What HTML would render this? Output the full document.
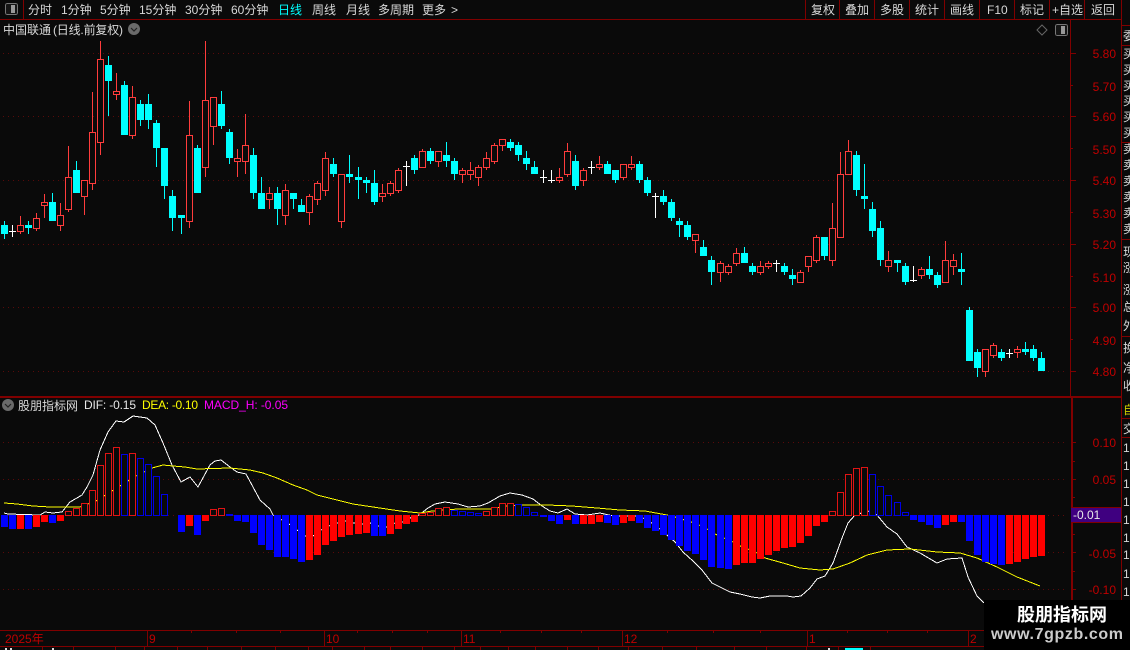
<!DOCTYPE html>
<html><head><meta charset="utf-8"><style>
html,body{margin:0;padding:0;background:#0a0a0a;width:1130px;height:650px;overflow:hidden}
svg{display:block;position:absolute;left:0;top:0}
text{font-family:"Liberation Sans","WenQuanYi Zen Hei","Noto Sans CJK SC",sans-serif;font-size:12px}
.t{fill:#d8d8d8}.a{fill:#c00000}
</style></head><body>
<svg id="s" width="1130" height="650" viewBox="0 0 1130 650" xmlns="http://www.w3.org/2000/svg">
<rect width="1130" height="650" fill="#0a0a0a"/>
<g fill="none" stroke="#5a0a0a" stroke-dasharray="1 4" shape-rendering="crispEdges">
<path d="M3 53.5H1066M3 116.5H1066M3 180.5H1066M3 244.5H1066M3 307.5H1066M3 371.5H1066M3 442.5H1066M3 479.5H1066M3 515.5H1066M3 552.5H1066M3 589.5H1066"/>
</g>
<g fill="none" stroke="#800000" shape-rendering="crispEdges">
<path d="M0 19.5H1121M0 396.5H1121M0 397.5H1121M0 630.5H984M0 646.5H984"/>
<path d="M1070.5 19V396M1071.5 397V630M1072.5 397V630M1121.5 0V630"/>
<path d="M23.5 0V19M805.5 0V19M839.5 0V19M874.5 0V19M909.5 0V19M944.5 0V19M979.5 0V19M1014.5 0V19M1049.5 0V19M1084.5 0V19"/>
<path d="M1121 25.5H1130M1121 45.5H1130M1121 142.5H1130M1121 239.5H1130M1121 336.5H1130M1121 418.5H1130M1121 437.5H1130"/>
<path d="M1071 53.5H1076M1071 85.5H1073M1071 116.5H1076M1071 148.5H1073M1071 180.5H1076M1071 212.5H1073M1071 244.5H1076M1071 276.5H1073M1071 307.5H1076M1071 339.5H1073M1071 371.5H1076"/>
<path d="M1073 442.5H1076M1073 461.5H1075M1073 479.5H1076M1073 497.5H1075M1073 534.5H1075M1073 552.5H1076M1073 571.5H1075M1073 589.5H1076"/>
<path d="M147.5 630V646M324.5 630V646M461.5 630V646M622.5 630V646M807.5 630V646M968.5 630V646"/>
<path d="M191.5 630V633M236.5 630V633M280.5 630V633M357.5 630V633M392.5 630V633M427.5 630V633M500.5 630V633M541.5 630V633M581.5 630V633M667.5 630V633M713.5 630V633M760.5 630V633M847.5 630V633M887.5 630V633M927.5 630V633"/>
<path d="M42.5 646V650M73.5 646V650M115.5 646V650M144.5 646V650M177.5 646V650M207.5 646V650M241.5 646V650M275.5 646V650M308.5 646V650M332.5 646V650M364.5 646V650M390.5 646V650M422.5 646V650M454.5 646V650M480.5 646V650M508.5 646V650M535.5 646V650M567.5 646V650M598.5 646V650M628.5 646V650M662.5 646V650M696.5 646V650M734.5 646V650M766.5 646V650M806.5 646V650M838.5 646V650M870.5 646V650"/>
</g>
<rect x="5" y="648" width="2" height="2" fill="#ddd"/><rect x="10" y="648" width="2" height="2" fill="#ddd"/><rect x="52" y="648" width="2" height="2" fill="#ddd"/><rect x="828" y="648" width="2" height="2" fill="#ddd"/><rect x="845" y="648" width="18" height="2" fill="#0ff"/>
<rect x="5.5" y="3.5" width="12" height="11" rx="2" fill="#151515" stroke="#777" shape-rendering="crispEdges"/><rect x="11" y="5" width="4" height="8" fill="#999"/>
<rect x="1055.5" y="24.5" width="12" height="11" rx="2" fill="#151515" stroke="#777" shape-rendering="crispEdges"/><rect x="1061" y="26" width="4" height="8" fill="#999"/>
<path d="M1042 25L1047 30L1042 35L1037 30Z" fill="none" stroke="#666"/>
<circle cx="134" cy="29" r="6" fill="#6a6a6a"/><path d="M131 28L134 31L137 28" fill="none" stroke="#222" stroke-width="1.2"/>
<circle cx="8" cy="405" r="6" fill="#6a6a6a"/><path d="M5 404L8 407L11 404" fill="none" stroke="#222" stroke-width="1.2"/>
<g class="t">
<text x="28" y="14">分时</text><text x="61" y="14">1分钟</text><text x="100" y="14">5分钟</text><text x="139" y="14">15分钟</text><text x="185" y="14">30分钟</text><text x="231" y="14">60分钟</text>
<text x="278" y="14" style="fill:#0ff">日线</text><text x="312" y="14">周线</text><text x="346" y="14">月线</text><text x="378" y="14">多周期</text><text x="422" y="14">更多</text><text x="451" y="14">&gt;</text>
<text x="811" y="14">复权</text><text x="845" y="14">叠加</text><text x="880" y="14">多股</text><text x="915" y="14">统计</text><text x="950" y="14">画线</text><text x="987" y="14">F10</text><text x="1020" y="14">标记</text><text x="1052" y="14">+自选</text><text x="1091" y="14">返回</text>
<text x="3" y="34">中国联通</text><text x="53" y="34" textLength="70">(日线.前复权)</text>
<text x="18" y="410">股朋指标网</text>
</g>
<text x="84" y="409" textLength="52" style="fill:#e8e8e8">DIF: -0.15</text>
<text x="142" y="409" textLength="56" style="fill:#ff0">DEA: -0.10</text>
<text x="204" y="409" textLength="84" style="fill:#f0f">MACD_H: -0.05</text>
<g class="a" text-anchor="end">
<text x="1116" y="58">5.80</text><text x="1116" y="91">5.70</text><text x="1116" y="121">5.60</text><text x="1116" y="154">5.50</text><text x="1116" y="185">5.40</text><text x="1116" y="218">5.30</text><text x="1116" y="249">5.20</text><text x="1116" y="282">5.10</text><text x="1116" y="312">5.00</text><text x="1116" y="345">4.90</text><text x="1116" y="376">4.80</text>
<text x="1116" y="447">0.10</text><text x="1116" y="484">0.05</text><text x="1116" y="558">-0.05</text><text x="1116" y="594">-0.10</text>
</g>
<g class="a">
<text x="5" y="643">2025年</text><text x="149" y="643">9</text><text x="326" y="643">10</text><text x="463" y="643">11</text><text x="624" y="643">12</text><text x="809" y="643">1</text><text x="970" y="643">2</text>
</g>
<polyline shape-rendering="crispEdges" fill="none" stroke="#fff" points="4,513 8,514 40,515 45,512 53,513 62,512 70,502 82,495 87,487 93,475 100,450 108,432 116,421 124,422 133,416 147,418 155,425 163,443 172,465 181,482 190,477 198,487 210,465 215,461 221,460 230,467 237,472 246,474 260,500 270,509 273,515 282,520 289,524 297,530 305,536 313,536 321,530 329,526 337,523 345,521 353,523 363,524 370,523 378,526 387,527 395,523 403,522 410,518 419,515 428,508 435,504 445,502 458,504 468,507 480,506 488,503 500,496 510,493 522,495 533,499 542,506 550,511 558,513 567,509 575,514 587,515 600,513 613,516 635,516 643,518 655,525 667,535 675,542 683,552 693,561 702,570 712,583 720,587 730,592 740,594 752,597 760,598 770,596 787,596 793,597 801,596 810,588 817,579 825,576 833,563 842,538 848,523 855,515 868,511 877,515 887,527 897,534 907,547 920,553 937,563 947,559 962,558 968,577 977,596 984,603"/>
<polyline shape-rendering="crispEdges" fill="none" stroke="#ff0" points="4,503 17,504 33,506 50,507 72,507 80,507 88,504 96,501 104,496 112,491 120,486 128,481 136,476 144,472 152,468 163,465 173,466 185,467 197,469 230,468 250,470 263,473 277,478 293,485 307,490 317,495 333,499 353,504 373,507 400,511 420,513 432,511 458,509 490,509 507,506 522,505 547,505 572,506 597,508 620,510 645,511 667,515 675,517 691,522 699,525 707,529 715,534 724,538 733,542 740,546 748,549 757,553 765,558 783,563 800,568 820,570 833,569 850,563 867,555 887,550 910,549 937,552 960,553 977,558 997,567 1017,577 1040,586"/>
<g id="bars" shape-rendering="crispEdges"></g>
<g id="candles" shape-rendering="crispEdges"></g>
<rect x="1071" y="507" width="50" height="16" fill="#3f0080"/>
<path d="M1071 507.5H1121M1071 522.5H1121" stroke="#800000"/>
<text x="1073" y="519" fill="#e8e8e8">-0.01</text>
<g style="clip-path:inset(0)">
<svg x="1122" y="0" width="8" height="630" viewBox="1122 0 8 630" overflow="hidden">
<g class="t">
<text x="1123" y="40">委</text><text x="1123" y="58">买</text><text x="1123" y="74">买</text><text x="1123" y="90">买</text><text x="1123" y="105">买</text><text x="1123" y="121">买</text><text x="1123" y="137">买</text>
<text x="1123" y="153">卖</text><text x="1123" y="169">卖</text><text x="1123" y="185">卖</text><text x="1123" y="201">卖</text><text x="1123" y="217">卖</text><text x="1123" y="233">卖</text>
<text x="1123" y="256">现</text><text x="1123" y="272">涨</text><text x="1123" y="294">涨</text><text x="1123" y="311">总</text><text x="1123" y="330">外</text>
<text x="1123" y="352">换</text><text x="1123" y="372">净</text><text x="1123" y="390">收</text>
<text x="1123" y="414" style="fill:#cc0">自</text><text x="1123" y="433">交</text>
<text x="1123" y="452">1</text><text x="1123" y="470">1</text><text x="1123" y="488">1</text><text x="1123" y="506">1</text><text x="1123" y="524">1</text><text x="1123" y="542">1</text><text x="1123" y="559">1</text><text x="1123" y="578">1</text><text x="1123" y="596">1</text>
</g></svg></g>
<rect x="984" y="600" width="146" height="50" fill="#000"/>
<text x="1017" y="621" style="font-family:'Noto Sans CJK SC',sans-serif;font-size:18px;font-weight:700;fill:#fff">股朋指标网</text>
<text x="991" y="639" textLength="132" style="font-size:16px;font-weight:700;fill:#ccc">www.7gpzb.com</text>
</svg>
<script>
(function(){
var NS="http://www.w3.org/2000/svg";
function L(i){var b=0;[22,44,67,89,111].forEach(function(k){if(i>=k)b++});return 1+8*i+b}
function R(g,x,y,w,h,f,s){var r=document.createElementNS(NS,"rect");r.setAttribute("x",x);r.setAttribute("y",y);r.setAttribute("width",w);r.setAttribute("height",Math.max(h,0));r.setAttribute("fill",f);if(s){r.setAttribute("stroke",s)}g.appendChild(r)}
var A="c663 675 702 718,w675 693 710,r648 676 695 702,c663 675 684 702,r640 655 686 692,r582 606 617 654,c579 606 663 663,r609 645 677 693,r438 531 629 636,c483 510 579 579,r540 540 590 645,r276 397 551 570,r123 178 428 465,c168 195 243 348,r219 274 285 300,c243 255 405 405,r258 291 408 417,c300 312 360 378,c282 312 360 387,c360 369 444 501,c444 444 558 597,c570 588 654 693,c645 645 654 702,r303 405 665 684,c435 444 579 579,r123 300 503 531,r291 291 380 435,c273 312 378 387,c387 396 474 492,r447 474 485 531,r342 435 485 522,c444 465 579 597,c531 579 627 627,r561 579 599 627,c561 579 627 675,r552 570 647 675,c579 579 597 627,c597 615 636 636,r582 588 638 675,r543 549 599 615,r456 474 572 588,c474 492 522 531,r522 522 665 684,c465 522 531 549,c501 531 540 597,c531 540 549 579,c510 549 606 615,r552 579 590 606,r543 549 581 588,r504 510 572 579,w483 498 558,c465 474 510 522,r447 453 503 503,c444 453 483 492,r453 453 485 501,c426 465 483 501,c474 483 522 540,r504 510 524 549,r486 510 524 540,r495 501 533 558";
var B="r66 84 114 120,r39 45 96 102,r27 27 48 63,c27 36 54 63,c36 45 75 93,c63 84 102 120,c93 111 132 132,w120 142 159,w120 151 159,r114 141 152 159,r39 63 135 141,c75 93 168 180,r114 120 153 168,w93 112 132,r78 102 114 120,c93 102 132 132,c120 120 150 159,r102 102 144 150,r78 102 114 120,c93 102 150 159,c141 150 189 198,w189 198 264,c180 198 216 225,c207 216 264 273,c264 273 285 321,c273 285 321 330,r312 312 333 369,c330 351 378 378,c378 390 426 465,r393 399 429 456,r402 408 429 435,r354 369 402 408,c351 369 399 399,c399 408 426 435,r393 408 429 435,r393 399 411 417,w390 399 426,c399 408 426 435,c417 435 447 465,r420 426 459 459,r378 378 411 426,r315 321 393 399,c321 321 378 390,r219 294 393 408,r66 132 324 324,r30 63 135 135,c63 75 180 198,c102 198 207 237,c216 237 303 321,c273 294 390 408,r363 390 411 426,c390 390 399 426,c399 408 456 465,w408 450 456,r411 417 438 447,c378 417 435 447,c426 435 465 474,r333 390 459 459,r372 390 411 435,c369 417 426 465";
var C="c231 240 393 393,c357 366 414 441,r357 357 426 441,r339 345 378 384,c357 366 384 393,w357 369 384,r348 357 369 384,c336 357 366 375,c345 357 384 393,c366 384 423 423";
var g=document.getElementById("candles"),idx=0;
function draw(str,off){str.split(",").forEach(function(e){var t=e[0],n=e.slice(1).split(" ").map(function(v){return off+Math.round(+v/3)}),x=L(idx);
if(t=="w"){R(g,x+3,n[0],1,n[2]-n[0],"#fff");R(g,x,n[1],7,1,"#fff")}
else if(t=="c"){R(g,x+3,n[0],1,n[3]-n[0],"#0ff");R(g,x,n[1],7,Math.max(n[2]-n[1],1),"#0ff")}
else{R(g,x+3,n[0],1,n[1]-n[0],"#ff3c3c");R(g,x+3,n[2],1,n[3]-n[2],"#ff3c3c");R(g,x+.5,n[1]+.5,6,n[2]-n[1]-1,"#0a0a0a","#ff3c3c")}
idx++})}
draw(A,0);draw(B,130);draw(C,230);
var M="b411 b417 r417 b417 r411 r396 b399 r393 R363 R354 R339 R300 R225 R189 R171 B192 R189 B204 B222 B258 B312 B375 b426 r408 b435 r393 R357 R354 B372 b393 b396 b429 b465 b480 b501 b501 b507 b516 r510 r495 r465 r453 r441 r435 r432 r429 b438 b438 r432 r417 r402 r396 R370 R366 R354 R351 B360 B363 B366 B369 R363 R351 R339 R339 B342 B351 B366 b381 b393 b402 r390 b402 r402 r402 r396 b399 b405 r399 r393 b399 b414 b423 b435 b450 b468 b483 b492 b510 b531 b534 b537 r525 r519 r519 r507 r495 r483 r474 r471 r459 r438 r408 r396 R363 R306 R252 R234 R231 B252 B288 B315 B336 B366 b390 b396 b405 b414 r405 r396 b396 b453 b495 b516 b522 b525 r522 r516 r507 r501 r498".split(" ");
var h=document.getElementById("bars");
M.forEach(function(e,i){var t=e[0],y=390+Math.round(+e.slice(1)/3),x=L(i);
if(t=="r")R(h,x,515,7,y-515,"#f00");
else if(t=="b")R(h,x,515,7,y-515,"#00f");
else if(t=="R")R(h,x+.5,y+.5,6,515-y,"#0a0a0a","#e01414");
else R(h,x+.5,y+.5,6,515-y,"#0a0a0a","#0000e6");
});
})();
</script>
</body></html>
